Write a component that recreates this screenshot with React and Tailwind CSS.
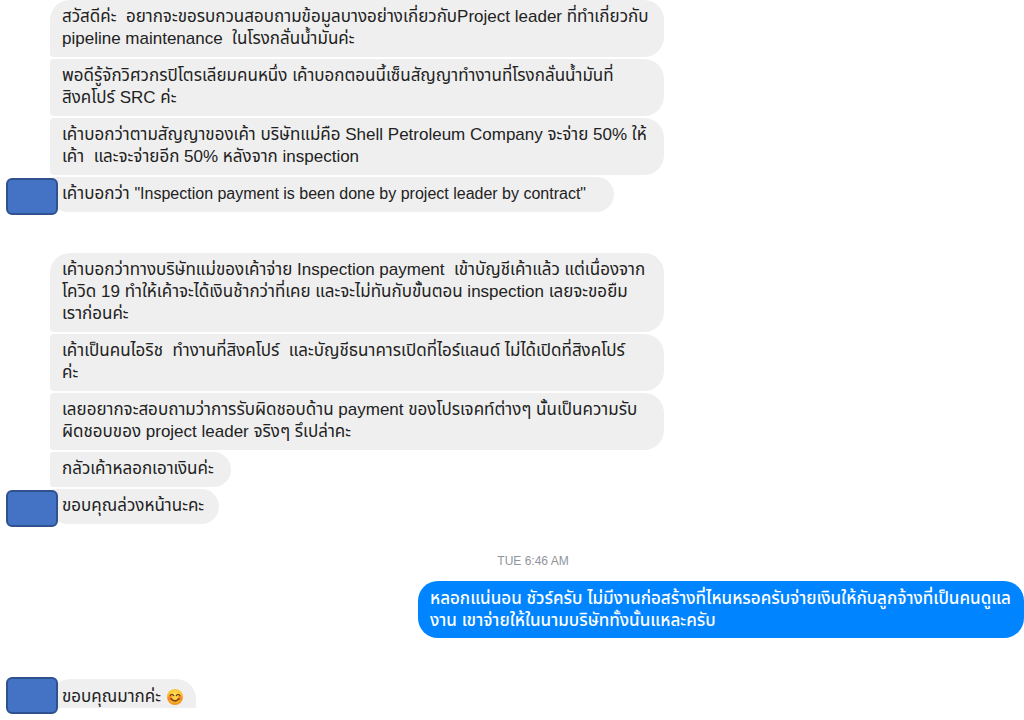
import React from "react";
import clsx from "clsx";

const firstGroup = [
  {
    lines: [
      "สวัสดีค่ะ  อยากจะขอรบกวนสอบถามข้อมูลบางอย่างเกี่ยวกับProject leader ที่ทำเกี่ยวกับ",
      "pipeline maintenance  ในโรงกลั่นน้ำมันค่ะ",
    ],
  },
  {
    lines: [
      "พอดีรู้จักวิศวกรปิโตรเลียมคนหนึ่ง เค้าบอกตอนนี้เซ็นสัญญาทำงานที่โรงกลั่นน้ำมันที่",
      "สิงคโปร์ SRC ค่ะ",
    ],
  },
  {
    lines: [
      "เค้าบอกว่าตามสัญญาของเค้า บริษัทแม่คือ Shell Petroleum Company จะจ่าย 50% ให้",
      "เค้า  และจะจ่ายอีก 50% หลังจาก inspection",
    ],
  },
  {
    lines: ["เค้าบอกว่า "],
    quote: '"Inspection payment is been done by project leader by contract"',
    width: "w-[564px]",
  },
];

const secondGroup = [
  {
    lines: [
      "เค้าบอกว่าทางบริษัทแม่ของเค้าจ่าย Inspection payment  เข้าบัญชีเค้าแล้ว แต่เนื่องจาก",
      "โควิด 19 ทำให้เค้าจะได้เงินช้ากว่าที่เคย และจะไม่ทันกับขั้นตอน inspection เลยจะขอยืม",
      "เราก่อนค่ะ",
    ],
  },
  {
    lines: [
      "เค้าเป็นคนไอริช  ทำงานที่สิงคโปร์  และบัญชีธนาคารเปิดที่ไอร์แลนด์ ไม่ได้เปิดที่สิงคโปร์",
      "ค่ะ",
    ],
  },
  {
    lines: [
      "เลยอยากจะสอบถามว่าการรับผิดชอบด้าน payment ของโปรเจคท์ต่างๆ นั้นเป็นความรับ",
      "ผิดชอบของ project leader จริงๆ รึเปล่าคะ",
    ],
  },
  { lines: ["กลัวเค้าหลอกเอาเงินค่ะ"], width: "w-[181px]" },
  { lines: ["ขอบคุณล่วงหน้านะคะ"], width: "w-[169px]" },
];

function Avatar({ className }) {
  return (
    <div
      className={clsx(
        "absolute left-1.5 h-[37px] w-[52px] rounded-md border-2 border-[#2f528f] bg-[#4472c4]",
        className
      )}
    />
  );
}

function SmileEmoji() {
  return (
    <svg
      role="img"
      aria-label="smiling face"
      viewBox="0 0 36 36"
      className="ml-1.5 inline-block size-4 align-[-3px]"
    >
      <defs>
        <radialGradient id="face" cx="50%" cy="35%" r="65%">
          <stop offset="0" stopColor="#ffe45c" />
          <stop offset="0.6" stopColor="#fdc02f" />
          <stop offset="1" stopColor="#f28a1c" />
        </radialGradient>
      </defs>
      <circle cx="18" cy="18" r="18" fill="url(#face)" />
      <circle cx="7" cy="21" r="5" fill="#f9612a" opacity="0.6" />
      <circle cx="29" cy="21" r="5" fill="#f9612a" opacity="0.6" />
      <path
        d="M7 15q4-6 8 0M21 15q4-6 8 0M9 22q9 10 18 0"
        fill="none"
        stroke="#6b3a10"
        strokeWidth="3"
        strokeLinecap="round"
      />
    </svg>
  );
}

function Lines({ lines, quote }) {
  return lines.map((line) => (
    <span key={line} className="block whitespace-pre">
      {line}
      {quote && <q className="text-[16px] before:content-none after:content-none">{quote}</q>}
    </span>
  ));
}

function MessageGroup({ messages }) {
  return (
    <ul className="flex flex-col gap-0.5">
      {messages.map(({ lines, quote, width = "w-[63%]" }, i) => {
        const last = i === messages.length - 1;
        return (
          <li key={i} className="relative pl-[50px]">
            <p
              className={clsx(
                "rounded-r-[20px] rounded-l-sm bg-[#efefef] px-3 pt-1.5 pb-[7px]",
                i === 0 && "rounded-tl-[20px]",
                last && "rounded-bl-[20px]",
                width
              )}
            >
              <Lines lines={lines} quote={quote} />
            </p>
            {last && <Avatar className="top-px" />}
          </li>
        );
      })}
    </ul>
  );
}

export default function App() {
  return (
    <main className="bg-white pb-2 font-['Liberation_Sans','Noto_Sans_Thai',sans-serif] text-[17px] leading-[22px] text-[#222]">
      <MessageGroup messages={firstGroup} />
      <div className="mt-[41px]">
        <MessageGroup messages={secondGroup} />
      </div>

      <time className="mt-[27px] block pl-[42px] text-center text-xs leading-5 text-[#90949c]">
        TUE 6:46 AM
      </time>

      <div className="mt-2.5 flex justify-end">
        <p className="w-[606px] rounded-[20px] bg-[#0084ff] px-3 pt-[7px] pb-1.5 font-medium text-white">
          <Lines
            lines={[
              "หลอกแน่นอน ชัวร์ครับ ไม่มีงานก่อสร้างที่ไหนหรอครับจ่ายเงินให้กับลูกจ้างที่เป็นคนดูแล",
              "งาน เขาจ่ายให้ในนามบริษัททั้งนั้นแหละครับ",
            ]}
          />
        </p>
      </div>

      <div className="relative mt-[41px] pl-[50px]">
        <p className="w-[146px] rounded-t-[20px] bg-[#efefef] px-3 pt-[7px] whitespace-nowrap">
          ขอบคุณมากค่ะ
          <SmileEmoji />
        </p>
        <Avatar className="-top-0.5" />
      </div>
    </main>
  );
}
